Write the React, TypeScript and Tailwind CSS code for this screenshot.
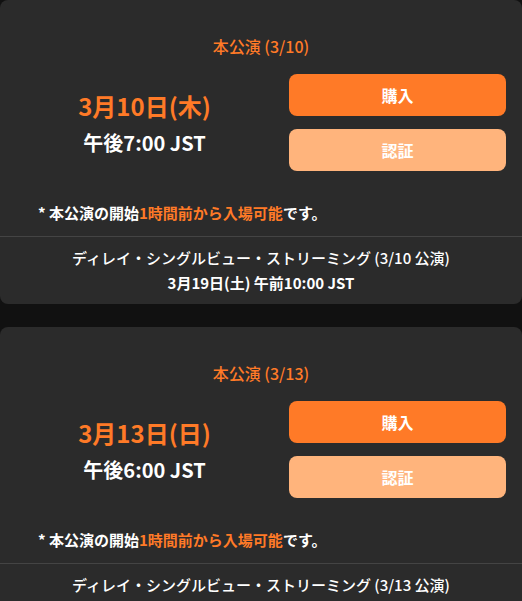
const shows = [
  {
    label: '本公演 (3/10)',
    date: '3月10日(木)',
    time: '午後7:00 JST',
    stream: 'ディレイ・シングルビュー・ストリーミング (3/10 公演)',
    streamDate: '3月19日(土) 午前10:00 JST',
  },
  {
    label: '本公演 (3/13)',
    date: '3月13日(日)',
    time: '午後6:00 JST',
    stream: 'ディレイ・シングルビュー・ストリーミング (3/13 公演)',
    streamDate: '3月22日(火) 午前10:00 JST',
  },
];

const ShowCard = ({ show }: { show: (typeof shows)[number] }) => {
  return (
    <div className="rounded-lg bg-[#2b2b2b]">
      <div className="px-4 pt-[34px] pb-[12px]">
        <h3 className="text-center text-[16px] leading-[24px] font-medium text-[#ff7a27]">{show.label}</h3>
        <div className="mt-[16px] flex items-center gap-4">
          <div className="flex flex-1 flex-col items-center pt-[1px]">
            <div className="text-[24px] leading-[34px] font-bold text-[#ff7a27]">{show.date}</div>
            <div className="mt-[6px] text-[20px] leading-[28px] font-bold text-white">{show.time}</div>
          </div>
          <div className="flex w-[217px] flex-col gap-[13px]">
            <button className="h-[42px] rounded-lg bg-[#ff7a27] text-[16px] font-bold text-white">購入</button>
            <button className="h-[42px] rounded-lg bg-[#ffb47c] text-[16px] font-bold text-white">認証</button>
          </div>
        </div>
        <p className="mt-[31px] pl-[22px] text-[15px] leading-[22px] font-bold text-white">
          * 本公演の開始<span className="text-[#ff7a27]">1時間前から入場可能</span>です。
        </p>
      </div>
      <div className="border-t border-[#444444] pt-[9px] pb-[10px] text-center text-white">
        <div className="text-[15px] leading-[24px] font-medium">{show.stream}</div>
        <div className="mt-[2px] text-[15px] leading-[22px] font-bold">{show.streamDate}</div>
      </div>
    </div>
  );
};

export default function App() {
  return (
    <div
      className="min-h-screen bg-[#111111] flex flex-col gap-[23px]"
      style={{ fontFamily: '"Noto Sans CJK JP", "Noto Sans", sans-serif' }}
    >
      {shows.map((s, i) => (
        <ShowCard key={i} show={s} />
      ))}
    </div>
  );
}
